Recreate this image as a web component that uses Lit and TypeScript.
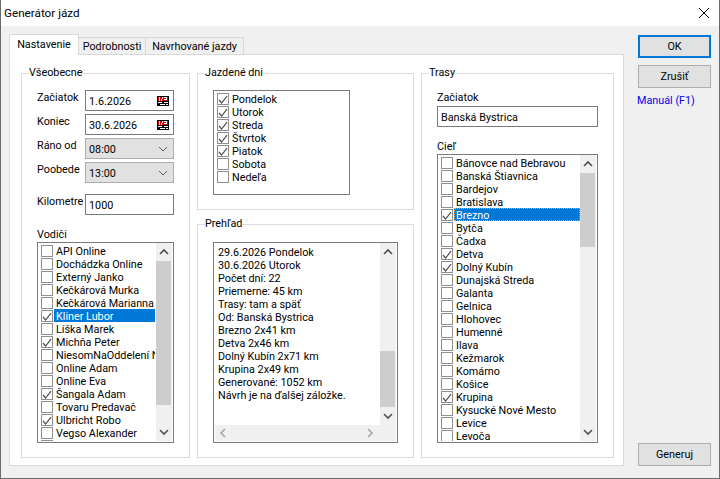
import { LitElement, html, css } from 'lit';
import { customElement } from 'lit/decorators.js';
import { classMap } from 'lit/directives/class-map.js';

interface Row {
    label: string;
    checked?: boolean;
    selected?: boolean;
    focused?: boolean;
}

const TABS = [
    { label: 'Nastavenie', width: 70, active: true },
    { label: 'Podrobnosti', width: 67 },
    { label: 'Navrhované jazdy', width: 98 }
];

const row = (label: string, checked = false, selected = false, focused = false): Row =>
    ({ label, checked, selected, focused });

const DRIVERS: Row[] = [
    row('API Online'), row('Dochádzka Online'), row('Externý Janko'),
    row('Kečkárová Murka'), row('Kečkárová Marianna'), row('Kliner Lubor', true, true),
    row('Líška Marek'), row('Michňa Peter', true), row('NiesomNaOddelení N'),
    row('Online Adam'), row('Online Eva'), row('Šangala Adam', true),
    row('Tovaru Predavač'), row('Ulbricht Robo', true), row('Vegso Alexander'), row('')
];

const DAYS: Row[] = [
    row('Pondelok', true), row('Utorok', true), row('Streda', true), row('Štvrtok', true),
    row('Piatok', true), row('Sobota'), row('Nedeľa')
];

const TARGETS: Row[] = [
    row('Bánovce nad Bebravou'), row('Banská Štiavnica'), row('Bardejov'), row('Bratislava'),
    row('Brezno', true, true, true), row('Bytča'), row('Čadxa'), row('Detva', true),
    row('Dolný Kubín', true), row('Dunajská Streda'), row('Galanta'), row('Gelnica'),
    row('Hlohovec'), row('Humenné'), row('Ilava'), row('Kežmarok'), row('Komárno'),
    row('Košice'), row('Krupina', true), row('Kysucké Nové Mesto'), row('Levice'), row('Levoča')
];

const SUMMARY = [
    '29.6.2026 Pondelok', '30.6.2026 Utorok', 'Počet dní: 22', 'Priemerne: 45 km',
    'Trasy: tam a späť', 'Od: Banská Bystrica', 'Brezno 2x41 km', 'Detva 2x46 km',
    'Dolný Kubín 2x71 km', 'Krupina 2x49 km', 'Generované: 1052 km', 'Návrh je na ďalšej záložke.'
];

const chevron = (points: string, dim = false) => html`
    <svg class="chevron ${dim ? 'dim' : ''}" viewBox="0 0 10 10" width="10" height="10">
        <polyline points=${points}></polyline>
    </svg>`;

const CHEV_UP = '1,7 5,3 9,7';
const CHEV_DOWN = '1,3 5,7 9,3';
const CHEV_LEFT = '7,1 3,5 7,9';
const CHEV_RIGHT = '3,1 7,5 3,9';

const calendar = html`
    <svg class="cal" viewBox="0 0 12 10" width="12" height="10" shape-rendering="crispEdges">
        <rect width="12" height="10" fill="#000"></rect>
        <rect x="1" y="1" width="10" height="4" fill="#e00000"></rect>
        <rect x="2" y="1" width="1" height="4" fill="#fff"></rect>
        <rect x="5" y="1" width="1" height="2" fill="#fff"></rect>
        <rect x="4" y="3" width="1" height="2" fill="#fff"></rect>
        <rect x="7" y="1" width="3" height="1" fill="#fff"></rect>
        <rect x="9" y="2" width="1" height="1" fill="#fff"></rect>
        <rect x="7" y="3" width="3" height="1" fill="#fff"></rect>
        <rect x="1" y="6" width="4" height="1" fill="#fff"></rect>
        <rect x="7" y="6" width="4" height="1" fill="#fff"></rect>
        <rect x="3" y="8" width="5" height="1" fill="#fff"></rect>
        <rect x="9" y="8" width="2" height="1" fill="#fff"></rect>
    </svg>`;

@customElement('app-root')
export class AppRoot extends LitElement {

    static styles = css`
        :host {
            display: block;
            width: 720px;
            height: 479px;
            font: 10.8px/15px Roboto, "Liberation Sans", sans-serif;
            color: #000;
        }

        * {
            box-sizing: border-box;
        }

        .window {
            display: flex;
            flex-direction: column;
            height: 100%;
            background: #f0f0f0;
            border: 1px solid #6b6b6b;
            border-top: 0;
        }

        .titlebar {
            display: flex;
            align-items: center;
            justify-content: space-between;
            height: 26px;
            flex: none;
            padding: 0 10px 0 3px;
            background: #fff;
            font-size: 11.7px;
        }

        .body {
            flex: 1;
            display: flex;
            gap: 14px;
            padding: 8px 8px 12px 8px;
            min-height: 0;
        }

        .tabs {
            width: 615px;
            display: flex;
            flex-direction: column;
        }

        .strip {
            position: relative;
            display: flex;
            align-items: flex-end;
            height: 21px;
            margin-bottom: -1px;
        }

        .tab {
            height: 18px;
            line-height: 17px;
            text-align: center;
            border: 1px solid #d9d9d9;
            border-left: 0;
            background: #f0f0f0;
        }

        .tab.active {
            height: 21px;
            line-height: 19px;
            border-left: 1px solid #d9d9d9;
            border-bottom: 0;
            background: #fff;
        }

        .pane {
            flex: 1;
            display: grid;
            grid-template-columns: 169px 217px 193px;
            gap: 7px;
            padding: 11px 0 7px 11px;
            background: #fff;
            border: 1px solid #d9d9d9;
        }

        .stack {
            display: flex;
            flex-direction: column;
            gap: 7px;
        }

        fieldset {
            margin: 0;
            min-width: 0;
            padding: 10px 15px 0 15px;
            border: 1px solid #dcdcdc;
        }

        legend {
            padding: 0;
            height: 14px;
            line-height: 14px;
            margin-left: -8px;
            background: #fff;
        }

        .fill {
            flex: 1;
        }

        .days {
            height: 144px;
        }

        .field {
            display: grid;
            grid-template-columns: 48px 89px;
            margin-bottom: 3px;
        }

        .field.spaced {
            margin-top: 11px;
        }

        .lbl {
            height: 13px;
            white-space: nowrap;
        }

        .caption {
            display: block;
            height: 13px;
            margin-bottom: 2px;
        }

        .caption.spaced {
            margin-top: 12px;
        }

        .caption.tight {
            margin-bottom: 3px;
        }

        .input,
        .combo {
            display: flex;
            align-items: center;
            justify-content: space-between;
            height: 21px;
            padding: 1px 4px 0 3px;
            background: #fff;
            border: 1px solid #7a7a7a;
        }

        .combo {
            background: #e1e1e1;
            border-color: #adadad;
        }

        .combo .chevron {
            margin-right: 1px;
        }

        .list {
            display: flex;
            background: #fff;
            border: 1px solid #7a7a7a;
            padding: 0 1px 1px 0;
            overflow: hidden;
        }

        .rows {
            flex: 1;
            min-width: 0;
            padding-top: 1px;
            overflow: hidden;
        }

        .row {
            display: flex;
            align-items: center;
            height: 13px;
            padding-left: 3px;
            white-space: nowrap;
        }

        .box {
            flex: none;
            display: block;
            width: 12px;
            height: 12px;
            margin-top: 1px;
            background: #fff;
            border: 1px solid #8f8f8f;
        }

        .box polyline {
            fill: none;
            stroke: #4f4f4f;
            stroke-width: 1.2;
        }

        .text {
            flex: 1;
            height: 13px;
            margin-left: 1px;
            padding-left: 2px;
        }

        .row.selected .text {
            background: #0078d7;
            color: #fff;
        }

        .row.focused .text {
            outline: 1px dotted #ffa030;
            outline-offset: -1px;
        }

        .drivers {
            width: 137px;
            height: 201px;
        }

        .drivers .rows {
            margin-right: 1px;
        }

        .daylist {
            width: 137px;
            height: 105px;
        }

        .targets {
            width: 161px;
            height: 289px;
        }

        .route {
            width: 161px;
        }

        .vbar {
            flex: none;
            width: 16px;
            display: flex;
            flex-direction: column;
            background: #f0f0f0;
        }

        .arrow {
            flex: none;
            height: 18px;
            display: flex;
            align-items: center;
            justify-content: center;
        }

        .track {
            flex: 1;
            min-height: 0;
        }

        .thumb {
            width: 15px;
            background: #cdcdcd;
        }

        .chevron {
            display: block;
        }

        .chevron polyline {
            fill: none;
            stroke: #505050;
            stroke-width: 1.6;
        }

        .chevron.dim polyline {
            stroke: #a6a6a6;
        }

        .combo .chevron polyline {
            stroke: #606060;
            stroke-width: 1;
        }

        .memo {
            width: 185px;
            height: 201px;
            margin-top: 1px;
            display: flex;
            flex-direction: column;
            background: #fff;
            border: 1px solid #7a7a7a;
            padding: 0 1px 1px 1px;
        }

        .memo-main {
            flex: 1;
            display: flex;
            min-height: 0;
        }

        .memo-text {
            flex: 1;
            padding: 2px 0 0 3px;
            white-space: nowrap;
            overflow: hidden;
        }

        .memo-text div {
            height: 13px;
        }

        .hbar {
            flex: none;
            height: 16px;
            display: flex;
            align-items: center;
            justify-content: space-between;
            padding: 0 21px 0 3px;
            background: #f0f0f0;
        }

        .side {
            width: 73px;
            display: flex;
            flex-direction: column;
            padding-top: 1px;
        }

        .btn {
            height: 23px;
            display: flex;
            align-items: center;
            justify-content: center;
            background: #e1e1e1;
            border: 1px solid #adadad;
            margin-bottom: 7px;
        }

        .btn.default {
            border: 2px solid #0078d7;
        }

        .btn.bottom {
            margin-top: auto;
            margin-bottom: 0;
        }

        .link {
            margin: -2px 0 0 -1px;
            color: #0000ee;
        }
    `;

    #rows(rows: Row[]) {
        return html`
            <div class="rows">
                ${rows.map((r) => html`
                    <div class=${classMap({ row: true, selected: !!r.selected, focused: !!r.focused })}>
                        <span class="box">
                            ${r.checked ? html`
                                <svg viewBox="0 0 10 10" width="10" height="10">
                                    <polyline points="1,5 3.6,8 9,1.2"></polyline>
                                </svg>` : ''}
                        </span>
                        <span class="text">${r.label}</span>
                    </div>`)}
            </div>`;
    }

    #vbar(thumbTop: number, thumbHeight: number) {
        return html`
            <div class="vbar">
                <div class="arrow">${chevron(CHEV_UP)}</div>
                <div class="track">
                    <div class="thumb" style="margin-top:${thumbTop}px;height:${thumbHeight}px"></div>
                </div>
                <div class="arrow">${chevron(CHEV_DOWN)}</div>
            </div>`;
    }

    #field(label: string, control: unknown, spaced = false) {
        return html`
            <div class="field ${spaced ? 'spaced' : ''}">
                <span class="lbl">${label}</span>
                ${control}
            </div>`;
    }

    #date(value: string) {
        return html`<div class="input"><span>${value}</span>${calendar}</div>`;
    }

    #combo(value: string) {
        return html`<div class="combo"><span>${value}</span>${chevron(CHEV_DOWN)}</div>`;
    }

    render() {
        return html`
            <div class="window">
                <div class="titlebar">
                    <span>Generátor jázd</span>
                    <svg viewBox="0 0 10 10" width="10" height="10">
                        <path d="M0 0L10 10M10 0L0 10" stroke="#000" stroke-width="1" fill="none"></path>
                    </svg>
                </div>
                <div class="body">
                    <div class="tabs">
                        <div class="strip">
                            ${TABS.map((t) => html`
                                <div class="tab ${t.active ? 'active' : ''}" style="width:${t.width}px">${t.label}</div>`)}
                        </div>
                        <div class="pane">
                            <fieldset>
                                <legend>Všeobecne</legend>
                                ${this.#field('Začiatok', this.#date('1.6.2026'))}
                                ${this.#field('Koniec', this.#date('30.6.2026'))}
                                ${this.#field('Ráno od', this.#combo('08:00'))}
                                ${this.#field('Poobede', this.#combo('13:00'))}
                                ${this.#field('Kilometre', html`<div class="input"><span>1000</span></div>`, true)}
                                <span class="caption spaced">Vodiči</span>
                                <div class="list drivers">
                                    ${this.#rows(DRIVERS)}
                                    ${this.#vbar(0, 144)}
                                </div>
                            </fieldset>
                            <div class="stack">
                                <fieldset class="days">
                                    <legend>Jazdené dni</legend>
                                    <div class="list daylist">${this.#rows(DAYS)}</div>
                                </fieldset>
                                <fieldset class="fill">
                                    <legend>Prehľad</legend>
                                    <div class="memo">
                                        <div class="memo-main">
                                            <div class="memo-text">
                                                ${SUMMARY.map((line) => html`<div>${line}</div>`)}
                                            </div>
                                            ${this.#vbar(90, 56)}
                                        </div>
                                        <div class="hbar">
                                            ${chevron(CHEV_LEFT, true)}
                                            ${chevron(CHEV_RIGHT, true)}
                                        </div>
                                    </div>
                                </fieldset>
                            </div>
                            <fieldset>
                                <legend>Trasy</legend>
                                <span class="caption tight">Začiatok</span>
                                <div class="input route"><span>Banská Bystrica</span></div>
                                <span class="caption spaced">Cieľ</span>
                                <div class="list targets">
                                    ${this.#rows(TARGETS)}
                                    ${this.#vbar(0, 74)}
                                </div>
                            </fieldset>
                        </div>
                    </div>
                    <div class="side">
                        <div class="btn default">OK</div>
                        <div class="btn">Zrušiť</div>
                        <span class="link">Manuál (F1)</span>
                        <div class="btn bottom">Generuj</div>
                    </div>
                </div>
            </div>
        `;
    }
}
